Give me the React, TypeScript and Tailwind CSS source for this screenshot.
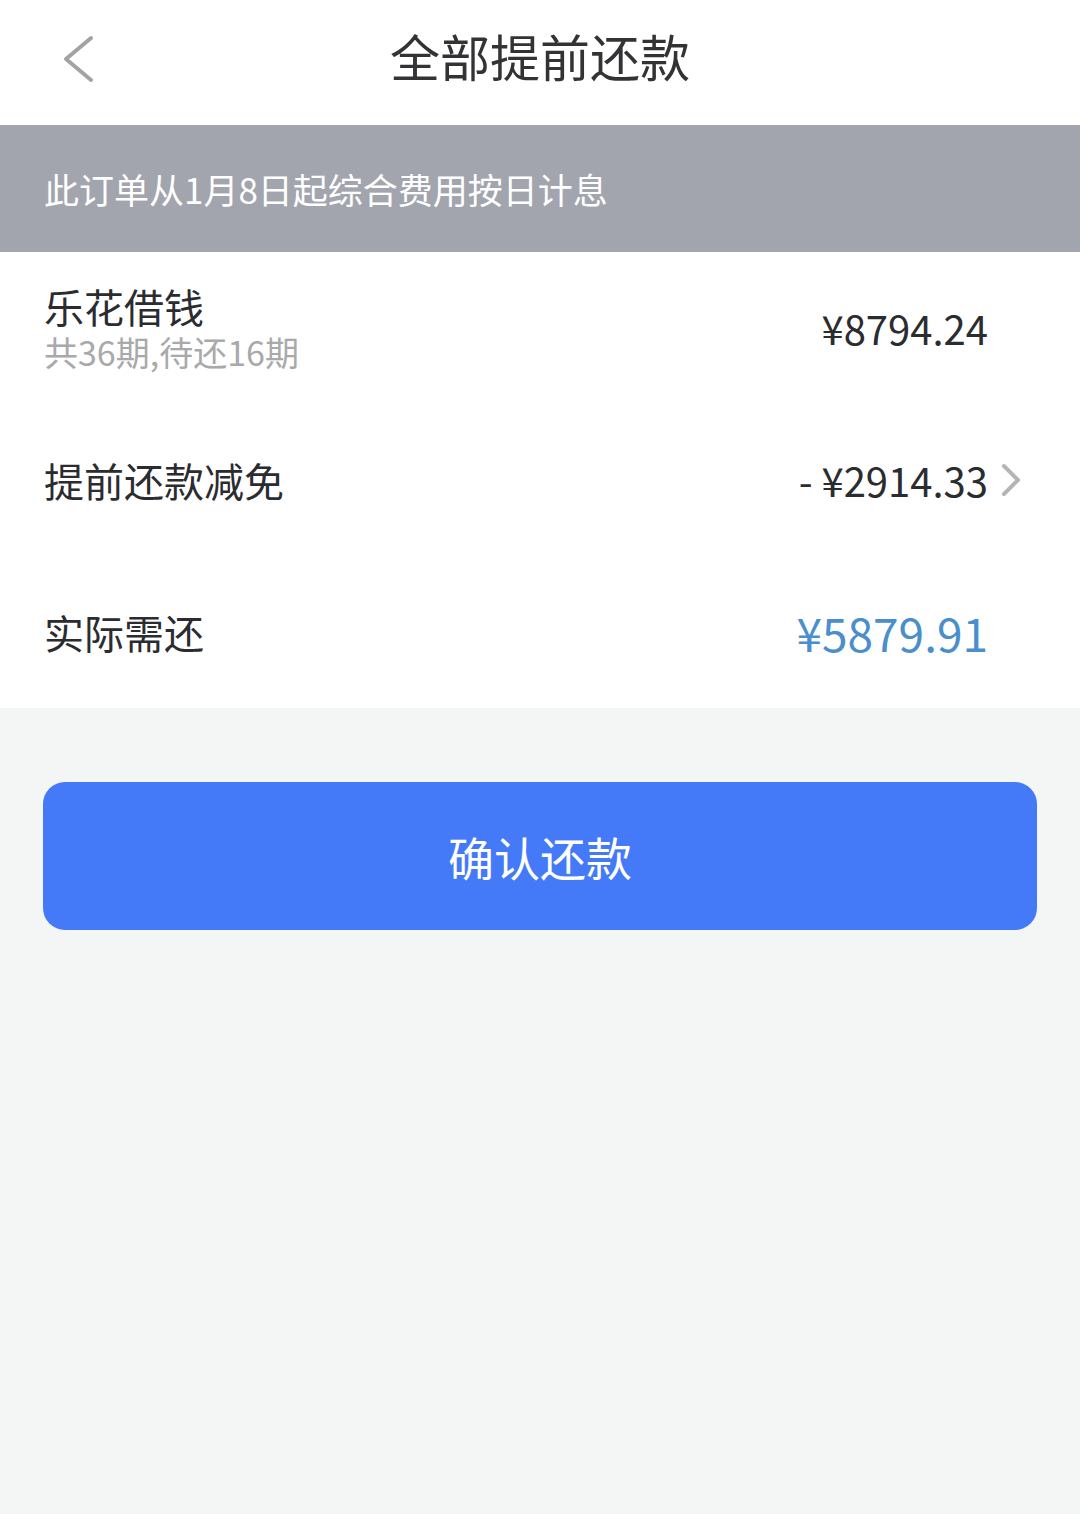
const font = { fontFamily: '"Noto Sans CJK SC", "Noto Sans", sans-serif' };

function Row({
  title,
  sub,
  amount,
  amountClass,
  arrow,
}: {
  title: string;
  sub?: string;
  amount: string;
  amountClass: string;
  arrow?: boolean;
}) {
  return (
    <div className="relative flex h-[152px] items-center pl-[44px] pr-[92px]">
      <div className="flex flex-1 flex-col">
        <span className="text-[40px] leading-[40px] text-[#2b2c30]">{title}</span>
        {sub && (
          <span className="mt-[8px] text-[34px] leading-[36px] text-[#a9a9ab]">{sub}</span>
        )}
      </div>
      <span className={amountClass}>{amount}</span>
      {arrow && (
        <svg
          className="absolute right-[58px] top-1/2 -translate-y-1/2"
          width="22"
          height="34"
          viewBox="0 0 22 34"
          fill="none"
          stroke="#b5b5b5"
          strokeWidth="4"
          strokeLinecap="round"
          strokeLinejoin="round"
        >
          <polyline points="4,3 18,17 4,31" />
        </svg>
      )}
    </div>
  );
}

export default function App() {
  return (
    <div style={font} className="min-h-[1514px] w-[1080px] bg-[#f4f6f6]">
      <header className="relative flex h-[125px] items-center justify-center bg-white pb-[16px]">
        <svg
          className="absolute left-[62px] top-[35px]"
          width="34"
          height="48"
          viewBox="0 0 34 48"
          fill="none"
          stroke="#a3a3a3"
          strokeWidth="4"
          strokeLinecap="round"
          strokeLinejoin="round"
        >
          <polyline points="29,3 4,24 29,45" />
        </svg>
        <h1 className="text-[50px] leading-none text-[#333336]">全部提前还款</h1>
      </header>

      <div className="flex h-[127px] items-center bg-[#a2a5ae] px-[44px]">
        <span className="text-[35px] leading-none text-white">此订单从1月8日起综合费用按日计息</span>
      </div>

      <section className="bg-white">
        <Row
          title="乐花借钱"
          sub="共36期,待还16期"
          amount="¥8794.24"
          amountClass="text-[40px] leading-none text-[#2b2c30]"
        />
        <Row
          title="提前还款减免"
          amount="- ¥2914.33"
          amountClass="text-[40px] leading-none text-[#2b2c30]"
          arrow
        />
        <Row
          title="实际需还"
          amount="¥5879.91"
          amountClass="text-[46px] leading-none text-[#4a8fcb]"
        />
      </section>

      <div className="px-[43px] pt-[74px]">
        <button
          type="button"
          className="flex h-[148px] w-full items-center justify-center rounded-[22px] bg-[#4479f8] text-[46px] text-white"
        >
          确认还款
        </button>
      </div>
    </div>
  );
}
